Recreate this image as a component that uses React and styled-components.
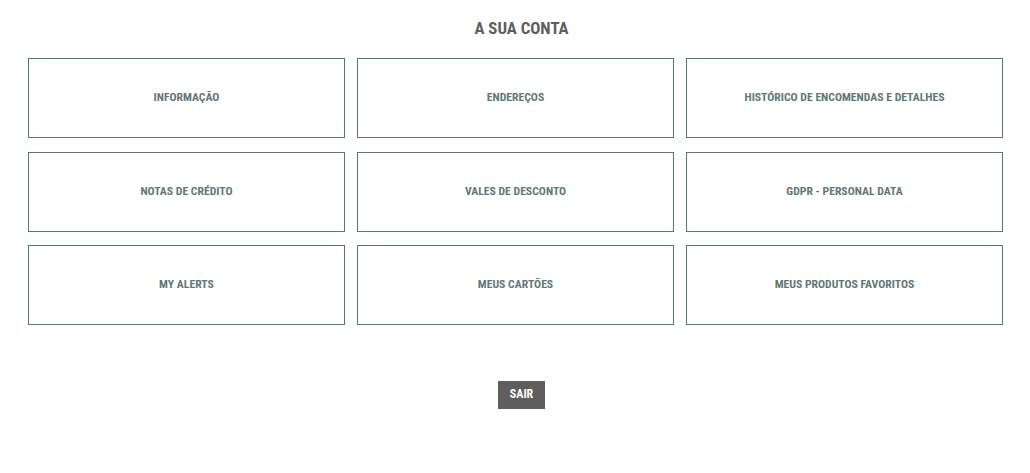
import React from "react";
import styled, { createGlobalStyle } from "styled-components";

const Global = createGlobalStyle`
  html, body { margin: 0; padding: 0; background: #fff; }
  body { font-family: Roboto, "Liberation Sans", sans-serif; }
`;

const Page = styled.div`
  width: 975px;
  padding: 0 27px 0 28px;
  display: flex;
  flex-direction: column;
  align-items: center;
`;

const Title = styled.h1`
  margin: 17px 0 0 12px;
  height: 22px;
  line-height: 22px;
  font-size: 16.8px;
  font-weight: 700;
  color: #5e5e5e;
  font-stretch: condensed;
  text-transform: uppercase;
`;

const Grid = styled.div`
  align-self: stretch;
  margin-top: 19px;
  display: grid;
  grid-template-columns: repeat(3, 317px);
  grid-auto-rows: 80px;
  column-gap: 12px;
  row-gap: 13.5px;
`;

const Card = styled.a`
  box-sizing: border-box;
  border: 1px solid #4f7b6c;
  padding-bottom: 2px;
  display: flex;
  align-items: center;
  justify-content: center;
  text-decoration: none;
  color: #5f7877;
  font-size: 11.7px;
  font-weight: 700;
  font-stretch: condensed;
  text-transform: uppercase;
`;

const Label = styled.span`
  display: inline-block;
`;

const Logout = styled.button`
  margin: 56px 0 0 12px;
  width: 47px;
  height: 28px;
  border: 0;
  background: #5e5e5e;
  color: #fff;
  font-family: Roboto, "Liberation Sans", sans-serif;
  font-size: 12px;
  font-weight: 700;
  font-stretch: condensed;
  padding: 0 0 2px;
`;

const items = [
  "Informação",
  "Endereços",
  "Histórico de encomendas e detalhes",
  "Notas de crédito",
  "Vales de desconto",
  "GDPR - Personal data",
  "My alerts",
  "Meus cartões",
  "Meus produtos favoritos",
];

export default function App() {
  return (
    <>
      <Global />
      <Page>
        <Title>A sua conta</Title>
        <Grid>
          {items.map((t) => (
            <Card key={t} href="#">
              <Label>{t}</Label>
            </Card>
          ))}
        </Grid>
        <Logout>SAIR</Logout>
      </Page>
    </>
  );
}
